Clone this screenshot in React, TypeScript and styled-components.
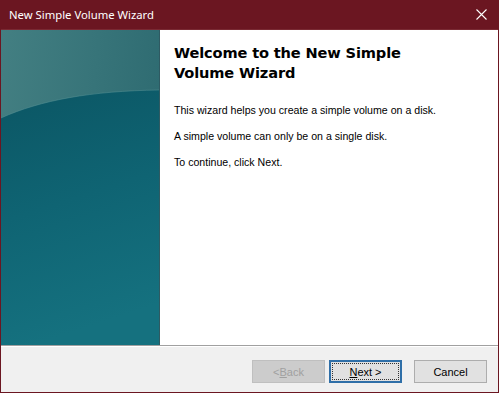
import React from "react"
import styled, { createGlobalStyle } from "styled-components"

const Global = createGlobalStyle`
  html, body { margin: 0; padding: 0; background: #ffffff; }
  body { width: 499px; height: 393px; overflow: hidden; }
`

const Window = styled.div`
  width: 499px;
  height: 393px;
  box-sizing: border-box;
  display: flex;
  flex-direction: column;
  background: #6b1621;
  padding: 0 1px 1px 1px;
`

const TitleBar = styled.div`
  height: 30px;
  display: flex;
  align-items: center;
  justify-content: space-between;
  padding-left: 8px;
  border-bottom: 1px solid #7a2a33;
  box-sizing: border-box;
`

const Title = styled.div`
  font-family: "Noto Sans", "Open Sans", sans-serif;
  font-size: 11.3px;
  color: #ffffff;
`

const CloseBtn = styled.div`
  width: 34px;
  height: 30px;
  display: flex;
  align-items: center;
  justify-content: center;
`

const Body = styled.div`
  flex: 1;
  display: flex;
  flex-direction: column;
  background: #f0f0f0;
`

const Main = styled.div`
  height: 315px;
  display: flex;
  border-bottom: 1px solid #a0a0a0;
`

const Art = styled.div`
  width: 158px;
  border-right: 1px solid #2f5a62;
  background: #0f6472;
  svg { display: block; }
`

const Content = styled.div`
  flex: 1;
  background: #ffffff;
  padding: 13px 14px 0 14px;
`

const Heading = styled.h1`
  margin: 0 0 20px 0;
  font-family: "DejaVu Sans", Verdana, sans-serif;
  font-weight: bold;
  font-size: 14.6px;
  letter-spacing: -0.15px;
  line-height: 20px;
  color: #000000;
  width: 260px;
`

const Para = styled.p`
  margin: 0 0 12px 0;
  font-family: "Liberation Sans", Arial, sans-serif;
  font-size: 10.6px;
  line-height: 14px;
  color: #000000;
`

const Footer = styled.div`
  flex: 1;
  border-top: 1px solid #ffffff;
  display: flex;
  justify-content: flex-end;
  align-items: flex-start;
  padding: 13px 11px 0 0;
`

const Button = styled.button<{ $kind?: "default" | "disabled" }>`
  width: 73px;
  height: 23px;
  margin-left: ${(p) => (p.$kind === "default" ? "4px" : "0")};
  margin-right: ${(p) => (p.$kind === "default" ? "12px" : "0")};
  box-sizing: border-box;
  font-family: "Liberation Sans", Arial, sans-serif;
  font-size: 11px;
  padding: 0;
  color: ${(p) => (p.$kind === "disabled" ? "#a0a0a0" : "#000000")};
  background: ${(p) => (p.$kind === "disabled" ? "#cccccc" : "#e1e1e1")};
  border: ${(p) =>
    p.$kind === "default"
      ? "2px solid #2f6fa8"
      : p.$kind === "disabled"
      ? "1px solid #bfbfbf"
      : "1px solid #adadad"};
  display: flex;
  align-items: center;
  justify-content: center;
  position: relative;
  ${(p) =>
    p.$kind === "default"
      ? `&::after { content: ""; position: absolute; inset: 1px; border: 1px dotted #333; }`
      : ""}
`

const Key = styled.span`
  text-decoration: underline;
`

const ArtGraphic = () => (
  <svg width="158" height="315" viewBox="0 0 158 315">
    <defs>
      <linearGradient id="top" x1="0" y1="0" x2="1" y2="0.2">
        <stop offset="0" stopColor="#437f82" />
        <stop offset="0.6" stopColor="#377479" />
        <stop offset="1" stopColor="#2f6c72" />
      </linearGradient>
      <linearGradient id="low" x1="0" y1="0" x2="0.2" y2="1">
        <stop offset="0" stopColor="#0b5664" />
        <stop offset="0.5" stopColor="#0f6473" />
        <stop offset="1" stopColor="#15717f" />
      </linearGradient>
    </defs>
    <rect width="158" height="315" fill="url(#top)" />
    <path d="M0 88 C 40 70, 90 61, 158 60 L158 315 L0 315 Z" fill="url(#low)" />
    <path d="M0 88 C 40 70, 90 61, 158 60" fill="none" stroke="#5d9699" strokeOpacity="0.45" strokeWidth="1" />
  </svg>
)

export default function App() {
  return (
    <>
      <Global />
      <Window>
        <TitleBar>
          <Title>New Simple Volume Wizard</Title>
          <CloseBtn>
            <svg width="11" height="11" viewBox="0 0 11 11">
              <path d="M0.5 0.5 L10.5 10.5 M10.5 0.5 L0.5 10.5" stroke="#ffffff" strokeWidth="1.1" />
            </svg>
          </CloseBtn>
        </TitleBar>
        <Body>
          <Main>
            <Art>
              <ArtGraphic />
            </Art>
            <Content>
              <Heading>Welcome to the New Simple Volume Wizard</Heading>
              <Para>This wizard helps you create a simple volume on a disk.</Para>
              <Para>A simple volume can only be on a single disk.</Para>
              <Para>To continue, click Next.</Para>
            </Content>
          </Main>
          <Footer>
            <Button $kind="disabled" disabled>
              &lt; <Key>B</Key>ack
            </Button>
            <Button $kind="default">
              <Key>N</Key>ext &gt;
            </Button>
            <Button>Cancel</Button>
          </Footer>
        </Body>
      </Window>
    </>
  )
}
